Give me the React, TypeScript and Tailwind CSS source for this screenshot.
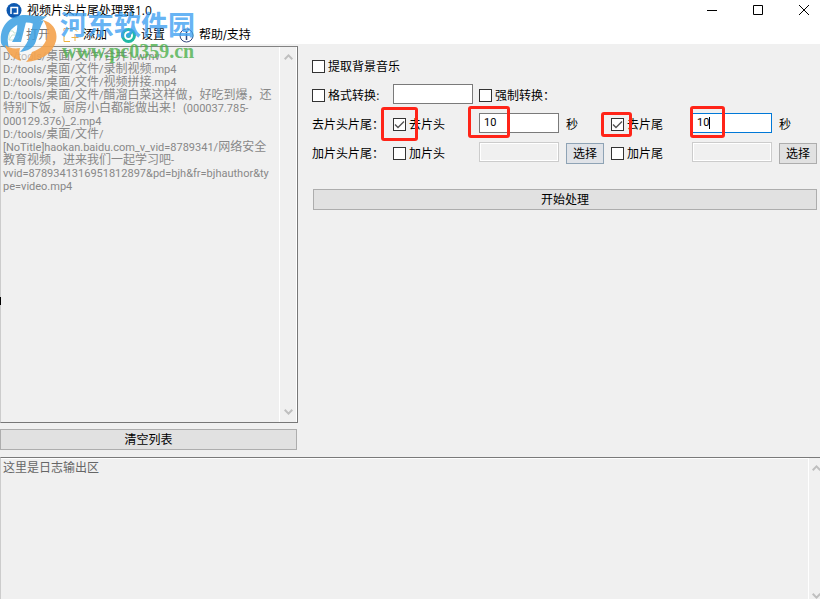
import type { ReactNode } from 'react';

const files = [
    'D:/tools/桌面/文件/合并1.wmv',
    'D:/tools/桌面/文件/录制视频.mp4',
    'D:/tools/桌面/文件/视频拼接.mp4',
    'D:/tools/桌面/文件/醋溜白菜这样做，好吃到爆，还\n特别下饭，厨房小白都能做出来！(000037.785-\n000129.376)_2.mp4',
    'D:/tools/桌面/文件/\n[NoTitle]haokan.baidu.com_v_vid=8789341/网络安全\n教育视频，进来我们一起学习吧-\nvvid=8789341316951812897&pd=bjh&fr=bjhauthor&ty\npe=video.mp4',
];

// Latin runs are set one size smaller than the Chinese around them
function MixedText({ text }: { text: string }) {
    return (
        <>
            {text.split(/([\x20-\x7e]+)/).map((part, index) => (
                <span key={index} className={/^[\x20-\x7e]/.test(part) ? 'text-[11px]' : ''}>
                    {part}
                </span>
            ))}
        </>
    );
}

function Chevron({ down = false }: { down?: boolean }) {
    return (
        <svg width="9" height="6" viewBox="0 0 9 6" fill="none" stroke="#bfbfbf" strokeWidth="2" className={down ? 'shrink-0 rotate-180' : 'shrink-0'}>
            <path d="M.7 5.2 4.5 1.4l3.8 3.8" />
        </svg>
    );
}

function Scrollbar({ className = '' }: { className?: string }) {
    return (
        <div className={`flex shrink-0 flex-col items-center justify-between border-l border-white ${className}`}>
            <Chevron />
            <Chevron down />
        </div>
    );
}

function Mark({ className }: { className: string }) {
    return <span className={`pointer-events-none absolute z-10 rounded-[3px] border-3 border-[#ff2418] ${className}`} />;
}

function Check({ label, checked = false, mark }: { label: string; checked?: boolean; mark?: string }) {
    return (
        <label className="relative flex items-center gap-[3px] whitespace-nowrap">
            <span className="grid size-[13px] shrink-0">
                <input
                    type="checkbox"
                    defaultChecked={checked}
                    className="peer col-start-1 row-start-1 size-[13px] appearance-none border border-[#333] bg-white"
                />
                <svg
                    viewBox="0 0 13 13"
                    fill="none"
                    stroke="#555"
                    strokeWidth="1.4"
                    className="pointer-events-none invisible col-start-1 row-start-1 size-[13px] peer-checked:visible"
                >
                    <path d="m2 6.5 3 3 6-6" />
                </svg>
            </span>
            {label}
            {mark && <Mark className={mark} />}
        </label>
    );
}

function Field({ label, value = '', disabled = false, focused = false, mark }: { label: string; value?: string; disabled?: boolean; focused?: boolean; mark?: string }) {
    const look = disabled
        ? 'border-[#ccc] bg-[#f0f0f0] shadow-[inset_0_0_0_1px_#fff]'
        : focused
          ? 'border-[#0078d7] bg-white'
          : 'border-[#7a7a7a] bg-white';
    return (
        <div className="relative mb-1 h-5 w-20">
            <input type="text" aria-label={label} defaultValue={value} disabled={disabled} className={`block h-5 w-20 border px-1 font-['Roboto',sans-serif] text-[11px] outline-none ${look}`} />
            {focused && <span className="absolute top-1 left-[17px] h-3 w-px bg-black" />}
            {mark && <Mark className={mark} />}
        </div>
    );
}

function PickButton({ className = 'border-[#adadad] bg-[#e1e1e1]' }: { className?: string }) {
    return <button className={`h-[21px] w-[38px] border ${className}`}>选择</button>;
}

function ToolButton({ icon, children, className }: { icon: ReactNode; children: ReactNode; className: string }) {
    return (
        <button className={`flex items-center whitespace-nowrap ${className}`}>
            {icon}
            {children}
        </button>
    );
}

function Watermark() {
    return (
        <div className="pointer-events-none absolute top-0 left-0" aria-hidden="true">
            <svg width="200" height="64" viewBox="0 0 200 64">
                <ellipse cx="29" cy="38" rx="26" ry="22" fill="#fff" opacity=".45" />
                <g opacity=".85">
                    <path d="M1 43C-1 27 9 15 25 15c8 0 15 2 22 1-4 4-9 7-13 8-8-3-16-1-21 4-4 3-6 8-5 15 0 3 1 5 3 7-5-1-9-4-10-7z" fill="#3a9fe2" />
                    <path d="M17 22h9l-5 20h-9c4-6 6-13 5-20z" fill="#3a9fe2" />
                    <path d="M33 23l11-3c-4 7-6 14-8 21-2 7-8 10-16 11 7-7 11-16 13-29z" fill="#3a9fe2" />
                    <path d="M43 20c11 3 15 12 13 21-3 12-15 20-30 21 3-3 4-6 6-10 9-3 14-8 15-16 1-6-1-12-4-16z" fill="#f49d42" />
                    <path d="M5 45c4 3 9 4 15 3-1 4-1 8 1 13C13 59 7 53 5 45z" fill="#f49d42" />
                </g>
                <text x="60" y="35" fontSize="27" fontWeight="700" fill="#3ea0f2" fillOpacity=".8" fontFamily="'Noto Sans CJK SC', sans-serif">
                    河东软件园
                </text>
                <text x="62" y="58" fontSize="20" fontWeight="700" fill="#4cb04c" fillOpacity=".8" fontFamily="'Liberation Serif', serif">
                    www.pc0359.cn
                </text>
            </svg>
        </div>
    );
}

export default function App() {
    return (
        <main className="relative flex min-h-screen flex-col overflow-hidden bg-[#f0f0f0] font-['DejaVu_Sans_Condensed','Noto_Sans_CJK_SC',sans-serif] text-xs text-black">
            <header className="bg-white">
                <div className="flex h-[22px] items-center pl-[6px]">
                    <svg width="16" height="16" viewBox="0 0 16 16" className="mr-[5px]">
                        <circle cx="8" cy="7.5" r="7.5" fill="#0d58b0" />
                        <path d="M4.500 4.500h7v6h-4M5 4v7" fill="none" stroke="#fff" strokeWidth="1.500" />
                    </svg>
                    <h1 className="flex-1 font-['Open_Sans','Noto_Sans_CJK_SC',sans-serif]">视频片头片尾处理器1.0</h1>
                    <div className="flex items-center gap-[34px] pr-[10px]">
                        <button aria-label="最小化">
                            <svg width="12" height="12" viewBox="0 0 12 12" stroke="#000"><path d="M1 5.5h10" /></svg>
                        </button>
                        <button aria-label="最大化">
                            <svg width="12" height="12" viewBox="0 0 12 12" fill="none" stroke="#000"><path d="M1.5.5h9v9h-9z" /></svg>
                        </button>
                        <button aria-label="关闭">
                            <svg width="12" height="12" viewBox="0 0 12 12" stroke="#000"><path d="m1 0 10 10M11 0 1 10" /></svg>
                        </button>
                    </div>
                </div>
                <nav className="flex h-[22px] items-center pt-1">
                    <ToolButton
                        className="gap-1 pl-2"
                        icon={
                            <svg width="14" height="14" viewBox="0 0 14 14" fill="none" stroke="#9dceb0">
                                <path d="M1 12V3h4l1 2h6v2M1 12l3-5h9l-3 5z" />
                            </svg>
                        }
                    >
                        打开
                    </ToolButton>
                    <ToolButton
                        className="gap-1 pl-[13px]"
                        icon={
                            <svg width="16" height="16" viewBox="0 0 16 16" fill="none" stroke="#efb23d">
                                <path d="M1 9v5.5h6M1 4V1.5h10l3 3M12 7v7M8.500 10.500h7" />
                            </svg>
                        }
                    >
                        添加
                    </ToolButton>
                    <ToolButton
                        className="gap-[5px] pl-[14px]"
                        icon={
                            <svg width="15" height="15" viewBox="0 0 15 15">
                                <circle cx="7.500" cy="7.500" r="7.500" fill="#22b9a4" />
                                <circle cx="7.500" cy="7.500" r="3.500" fill="none" stroke="#fff" strokeWidth="2" />
                                <path d="m7 8 5-5" stroke="#22b9a4" strokeWidth="2" />
                            </svg>
                        }
                    >
                        设置
                    </ToolButton>
                    <ToolButton
                        className="gap-[5px] pl-[14px]"
                        icon={
                            <svg width="15" height="15" viewBox="0 0 15 15" fill="none" stroke="#34477c">
                                <circle cx="7.500" cy="7.500" r="6.500" />
                                <path d="M7.500 3v2M7.500 6v6" strokeWidth="1.500" />
                            </svg>
                        }
                    >
                        帮助/支持
                    </ToolButton>
                </nav>
            </header>

            <div className="flex pt-[2px]">
                <section className="flex w-[298px] shrink-0 flex-col gap-[6px] pb-[7px]">
                    <div className="flex h-[377px] border border-l-[#ccc] border-t-[#828282] border-r-[#777] border-b-[#777] text-[#888]">
                        <ul className="min-w-0 flex-1 pt-[3px] pl-[2px] font-['Roboto','Noto_Sans_CJK_SC',sans-serif] leading-[13px] whitespace-pre">
                            {files.map((file) => (
                                <li key={file}>
                                    <MixedText text={file} />
                                </li>
                            ))}
                        </ul>
                        <Scrollbar className="w-[18px] border-r pt-[7px] pb-[7px]" />
                    </div>
                    <button className="mr-px h-[21px] border border-[#adadad] bg-[#e1e1e1]">清空列表</button>
                </section>

                <section className="min-w-0 flex-1 pt-[6px] pr-[3px] pl-[14px]">
                    <div className="grid auto-rows-[29px] grid-cols-[81px_86px_87px_45px_81px_87px_38px] items-center">
                        <div className="col-span-7">
                            <Check label="提取背景音乐" />
                        </div>

                        <Check label="格式转换:" />
                        <Field label="格式转换" />
                        <div className="col-span-5">
                            <Check label="强制转换：" />
                        </div>

                        <span>去片头片尾：</span>
                        <Check label="去片头" checked mark="-top-[10px] -left-3 h-[34px] w-[37px]" />
                        <Field label="去片头秒数" value="10" mark="-top-[7px] -left-[11px] h-8 w-[42px]" />
                        <span>秒</span>
                        <Check label="去片尾" checked mark="-top-[5px] -left-[10px] h-[25px] w-[31px]" />
                        <Field label="去片尾秒数" value="10" focused mark="-top-[7px] -left-[2px] h-8 w-[35px]" />
                        <span>秒</span>

                        <span>加片头片尾：</span>
                        <Check label="加片头" />
                        <Field label="加片头文件" disabled />
                        <PickButton className="border-[#8ea3b5] bg-[#e0e3e8]" />
                        <Check label="加片尾" />
                        <Field label="加片尾文件" disabled />
                        <PickButton />
                    </div>
                    <div className="pt-[21px] pl-px">
                        <button className="block h-[21px] w-full border border-[#adadad] bg-[#e1e1e1]">开始处理</button>
                    </div>
                </section>
            </div>

            <section aria-label="日志" className="flex flex-1 border-t border-l border-t-[#7a7a7a] border-l-[#ccc] text-[#666]">
                <p className="flex-1 border-t border-white pl-[2px] leading-[18px]">这里是日志输出区</p>
                <Scrollbar className="-mr-1 w-4 pt-[7px]" />
            </section>

            <span className="absolute top-[297px] left-0 h-2 w-px bg-black" />
            <Watermark />
        </main>
    );
}
